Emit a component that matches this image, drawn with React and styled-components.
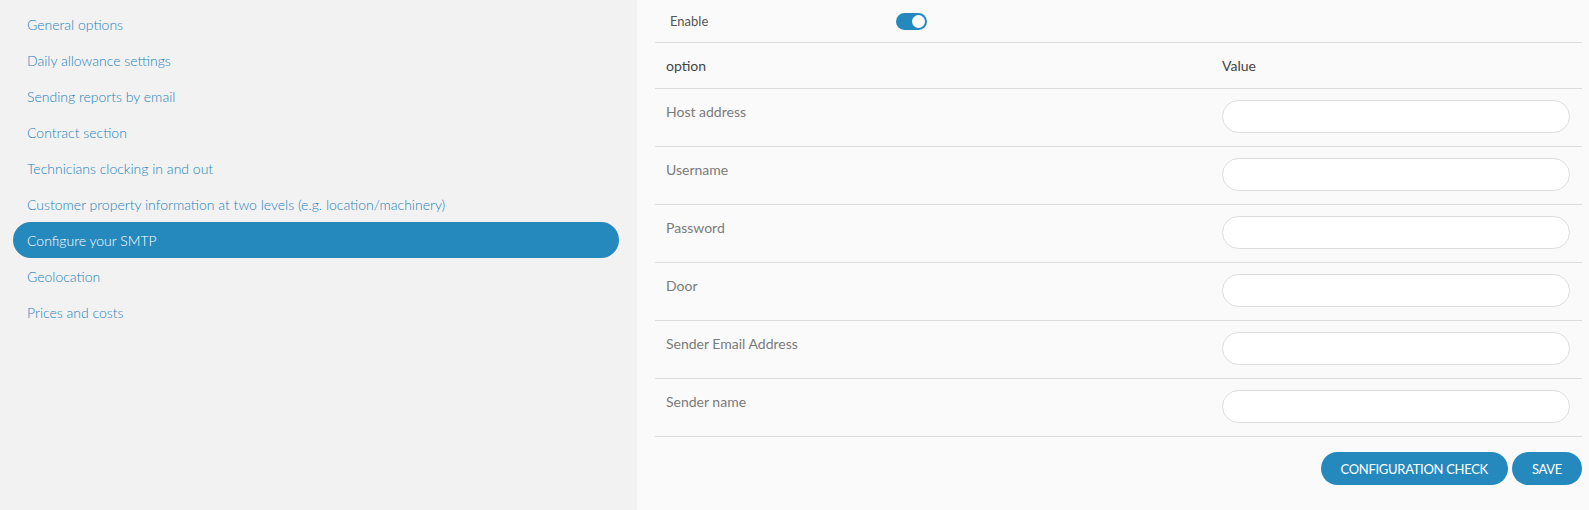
import styled, { createGlobalStyle } from 'styled-components';

const menuItems = [
  'General options',
  'Daily allowance settings',
  'Sending reports by email',
  'Contract section',
  'Technicians clocking in and out',
  'Customer property information at two levels (e.g. location/machinery)',
  'Configure your SMTP',
  'Geolocation',
  'Prices and costs',
];

const fields = [
  'Host address',
  'Username',
  'Password',
  'Door',
  'Sender Email Address',
  'Sender name',
];

export default function App() {
  return (
    <>
      <GlobalStyle />
      <Page>
        <Sidebar>
          {menuItems.map((item) => (
            <MenuItem key={item} $active={item === 'Configure your SMTP'}>
              {item}
            </MenuItem>
          ))}
        </Sidebar>
        <Main>
          <EnableRow>
            <EnableLabel>Enable</EnableLabel>
            <Toggle>
              <Knob />
            </Toggle>
          </EnableRow>
          <Table>
            <colgroup>
              <col style={{ width: 556 }} />
              <col />
            </colgroup>
            <thead>
              <tr>
                <HeadCell>option</HeadCell>
                <HeadCell>Value</HeadCell>
              </tr>
            </thead>
            <tbody>
              {fields.map((field) => (
                <Row key={field}>
                  <LabelCell>{field}</LabelCell>
                  <ValueCell>
                    <Input type={field === 'Password' ? 'password' : 'text'} />
                  </ValueCell>
                </Row>
              ))}
            </tbody>
          </Table>
          <Actions>
            <Button>CONFIGURATION CHECK</Button>
            <Button>SAVE</Button>
          </Actions>
        </Main>
      </Page>
    </>
  );
}

const GlobalStyle = createGlobalStyle`
  html, body {
    margin: 0;
    padding: 0;
    background: #fafafa;
    font-family: 'Lato', 'Liberation Sans', sans-serif;
  }
  * {
    box-sizing: border-box;
  }
`;

const Page = styled.div`
  display: grid;
  grid-template-columns: 637px 1fr;
  min-height: 100vh;
`;

const Sidebar = styled.nav`
  background-color: #f2f2f2;
  padding: 6px 18px 0 13px;
  display: flex;
  flex-direction: column;
`;

const MenuItem = styled.div`
  height: 36px;
  display: flex;
  align-items: center;
  padding: 0 14px;
  border-radius: 18px;
  font-size: 14px;
  font-weight: 300;
  color: ${(p) => (p.$active ? '#ffffff' : '#1f82bd')};
  background-color: ${(p) => (p.$active ? '#2689be' : 'transparent')};
  cursor: pointer;
`;

const Main = styled.main`
  background-color: #fafafa;
  padding: 0 7px 0 18px;
`;

const EnableRow = styled.div`
  height: 42px;
  display: flex;
  align-items: center;
  padding-left: 15px;
`;

const EnableLabel = styled.span`
  width: 226px;
  font-size: 13px;
  color: #555;
`;

const Toggle = styled.div`
  width: 31px;
  height: 17px;
  border-radius: 9px;
  background-color: #2689be;
  display: flex;
  align-items: center;
  justify-content: flex-end;
  padding: 0 2px;
`;

const Knob = styled.div`
  width: 13px;
  height: 13px;
  border-radius: 50%;
  background: #ffffff;
`;

const Table = styled.table`
  width: 100%;
  border-collapse: collapse;
  table-layout: fixed;
`;

const HeadCell = styled.th`
  text-align: left;
  font-size: 14px;
  font-weight: 400;
  color: #444;
  line-height: 21px;
  padding: 12px 11px;
  border-top: 1px solid #dddddd;
  border-bottom: 1px solid #dddddd;
`;

const Row = styled.tr`
  border-bottom: 1px solid #dddddd;
`;

const LabelCell = styled.td`
  vertical-align: top;
  font-size: 14px;
  font-weight: 400;
  color: #7a7a7a;
  line-height: 21px;
  padding: 12px 11px;
`;

const ValueCell = styled.td`
  vertical-align: top;
  padding: 11px 12px 13px 11px;
`;

const Input = styled.input`
  display: block;
  width: 100%;
  height: 33px;
  border: 1px solid #dddddd;
  border-radius: 17px;
  background: #ffffff;
  padding: 0 14px;
  font-family: inherit;
  font-size: 14px;
  outline: none;
`;

const Actions = styled.div`
  display: flex;
  justify-content: flex-end;
  gap: 4px;
  margin-top: 15px;
`;

const Button = styled.button`
  height: 33px;
  padding: 0 20px;
  border: none;
  border-radius: 17px;
  background-color: #2689be;
  color: #ffffff;
  font-family: inherit;
  font-size: 13px;
  letter-spacing: -0.3px;
  cursor: pointer;
`;
